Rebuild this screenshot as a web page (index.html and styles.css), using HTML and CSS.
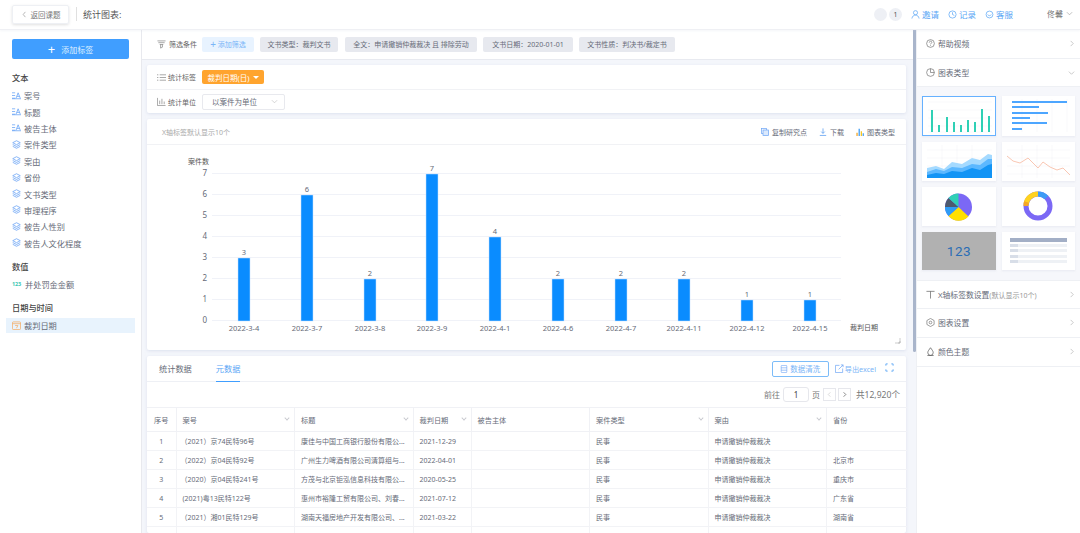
FILE: index.html
```html
<!DOCTYPE html>
<html lang="zh">
<head>
<meta charset="utf-8">
<title>统计图表</title>
<link rel="stylesheet" href="styles.css">
</head>
<body>
<div class="app">
  <header class="topbar">
    <button class="back"><svg class="ic7" viewBox="0 0 8 8"><path d="M5 1 2.500 4 5 7" fill="none" stroke="#999" stroke-width=".8"/></svg>返回课题</button>
    <span class="divider"></span>
    <span class="title">统计图表:</span>
    <div class="top-right">
      <span class="dot"></span><span class="dot">1</span>
      <a class="toplink"><svg class="ic9" viewBox="0 0 10 10" fill="none" stroke="#5aa6f5" stroke-width=".8"><circle cx="5" cy="3" r="2.300"/><path d="M1 9.500c.4-2.600 2-3.800 4-3.800s3.600 1.200 4 3.800"/></svg>邀请</a>
      <a class="toplink"><svg class="ic9" viewBox="0 0 10 10" fill="none" stroke="#5aa6f5" stroke-width=".8"><circle cx="5" cy="5" r="4"/><path d="M5 2.500V5l2 1"/></svg>记录</a>
      <a class="toplink"><svg class="ic9" viewBox="0 0 10 10" fill="none" stroke="#5aa6f5" stroke-width=".8"><circle cx="5" cy="5" r="3.800"/><path d="M3 5c.6 1 1.300 1.300 2 1.300S6.400 6 7 5"/></svg>客服</a>
      <span class="user">佟馨<svg class="ic7" viewBox="0 0 8 8"><path d="M1 2.500 4 5.500 7 2.500" fill="none" stroke="#999" stroke-width=".7"/></svg></span>
    </div>
  </header>
  <div class="body">
    <aside class="sidebar">
      <button class="add-tag"><span class="plus">+</span>添加标签</button>
      <h4 class="group first">文本</h4>
      <div class="item"><svg class="tic" viewBox="0 0 10 8"><path d="M0 1h3.500M0 4h3.500M0 7h3.500M4.500 7 6.800 1 9.200 7M5.500 5h2.800M0 7.600h10" fill="none" stroke="#5e9df5" stroke-width=".8"/></svg>案号</div>
      <div class="item"><svg class="tic" viewBox="0 0 10 8"><path d="M0 1h3.500M0 4h3.500M0 7h3.500M4.500 7 6.800 1 9.200 7M5.500 5h2.800M0 7.600h10" fill="none" stroke="#5e9df5" stroke-width=".8"/></svg>标题</div>
      <div class="item"><svg class="tic" viewBox="0 0 10 8"><path d="M0 1h3.500M0 4h3.500M0 7h3.500M4.500 7 6.800 1 9.200 7M5.500 5h2.800M0 7.600h10" fill="none" stroke="#5e9df5" stroke-width=".8"/></svg>被告主体</div>
      <div class="item"><svg class="tic" viewBox="0 0 10 10"><use href="#layers"/></svg>案件类型</div>
      <div class="item"><svg class="tic" viewBox="0 0 10 10"><use href="#layers"/></svg>案由</div>
      <div class="item"><svg class="tic" viewBox="0 0 10 10"><use href="#layers"/></svg>省份</div>
      <div class="item"><svg class="tic" viewBox="0 0 10 10"><use href="#layers"/></svg>文书类型</div>
      <div class="item"><svg class="tic" viewBox="0 0 10 10"><use href="#layers"/></svg>审理程序</div>
      <div class="item"><svg class="tic" viewBox="0 0 10 10"><use href="#layers"/></svg>被告人性别</div>
      <div class="item"><svg class="tic" viewBox="0 0 10 10"><use href="#layers"/></svg>被告人文化程度</div>
      <h4 class="group">数值</h4>
      <div class="item"><span class="num-ic">123</span>并处罚金金额</div>
      <h4 class="group">日期与时间</h4>
      <div class="item active"><svg class="tic" viewBox="0 0 10 10" fill="none" stroke="#f5a85c" stroke-width=".8"><rect x=".5" y="1" width="9" height="8.500" rx="1"/><path d="M.5 3h9M3.500 5h3L5 8"/></svg>裁判日期</div>
    </aside>
    <main class="main">
      <div class="filterbar">
        <span class="flabel"><svg class="ic9" viewBox="0 0 10 10" fill="none" stroke="#777" stroke-width=".7"><path d="M.5 1h9M1.500 3h7M3 5h4M4 5v4l2-1V5"/></svg>筛选条件</span>
        <button class="add-filter"><span class="plus-sm">+</span>添加筛选</button>
        <span class="chip w78">文书类型：裁判文书</span>
        <span class="chip w132">全文：申请撤销仲裁裁决 且 排除劳动</span>
        <span class="chip w90">文书日期：2020-01-01</span>
        <span class="chip w96">文书性质：判决书/裁定书</span>
      </div>
      <div class="content">
        <section class="panel settings">
          <div class="srow">
            <span class="slabel"><svg class="ic9" viewBox="0 0 10 10" stroke="#777" stroke-width=".7"><path d="M0 2h1.500M0 5h1.500M0 8h1.500M3 2h7M3 5h7M3 8h7"/></svg>统计标签</span>
            <span class="orange">裁判日期(日)<i class="caret"></i></span>
          </div>
          <div class="srow">
            <span class="slabel"><svg class="ic9" viewBox="0 0 10 10" fill="none" stroke="#777" stroke-width=".7"><path d="M.5 1v8.500h9M3 8V4M5.500 8V2M8 8V5"/></svg>统计单位</span>
            <span class="select">以案件为单位<svg class="ic7" viewBox="0 0 8 8"><path d="M1 2.500 4 5.500 7 2.500" fill="none" stroke="#bbb" stroke-width=".7"/></svg></span>
          </div>
        </section>
        <section class="panel chart-panel">
          <div class="chart-head">
            <span class="hint">X轴标签默认显示10个</span>
            <div class="tools">
              <span class="tool"><svg class="ic8" viewBox="0 0 10 10" fill="none" stroke="#6ea6f5" stroke-width=".9"><rect x=".5" y=".5" width="6.500" height="6.500"/><rect x="2.500" y="2.500" width="7" height="7" fill="#dbe9fd"/></svg>复制研究点</span>
              <span class="tool"><svg class="ic8" viewBox="0 0 10 10" fill="none" stroke="#4f96f0" stroke-width=".9"><path d="M5 .5v6M2.800 4.500 5 6.800l2.200-2.300M1 9.300h8"/></svg>下载</span>
              <span class="tool"><svg class="ic8" viewBox="0 0 10 10"><path d="M.5 10V6h1.600v4z" fill="#f5a623"/><path d="M3.200 10V1h1.600v9z" fill="#3d9bf5"/><path d="M5.900 10V4h1.600v6z" fill="#f5c623"/><path d="M8.300 10V6.500h1.500V10z" fill="#3d9bf5"/></svg>图表类型</span>
            </div>
          </div>
          <svg class="chart" viewBox="0 0 759 205" width="759" height="205">
            <g class="grid">
              <path d="M65 28.500H694M65 49.500H694M65 70.500H694M65 91.500H694M65 112.500H694M65 133.500H694M65 154.500H694M65 175.500H694"/>
            </g>
            <g class="ylab">
              <text x="60" y="31">7</text><text x="60" y="52">6</text><text x="60" y="73">5</text><text x="60" y="94">4</text><text x="60" y="115">3</text><text x="60" y="136">2</text><text x="60" y="157">1</text><text x="60" y="178">0</text>
            </g>
            <text class="axname" x="41" y="19">案件数</text>
            <g class="bars">
              <rect x="91" y="113" width="12" height="63"/><rect x="154" y="50" width="12" height="126"/><rect x="217" y="134" width="12" height="42"/><rect x="279" y="29" width="12" height="147"/><rect x="342" y="92" width="12" height="84"/><rect x="405" y="134" width="12" height="42"/><rect x="468" y="134" width="12" height="42"/><rect x="531" y="134" width="12" height="42"/><rect x="594" y="155" width="12" height="21"/><rect x="657" y="155" width="12" height="21"/>
            </g>
            <g class="vals">
              <text x="97" y="110">3</text><text x="160" y="47">6</text><text x="223" y="131">2</text><text x="285" y="26">7</text><text x="348" y="89">4</text><text x="411" y="131">2</text><text x="474" y="131">2</text><text x="537" y="131">2</text><text x="600" y="152">1</text><text x="663" y="152">1</text>
            </g>
            <g class="xlab">
              <text x="97" y="186">2022-3-4</text><text x="160" y="186">2022-3-7</text><text x="223" y="186">2022-3-8</text><text x="285" y="186">2022-3-9</text><text x="348" y="186">2022-4-1</text><text x="411" y="186">2022-4-6</text><text x="474" y="186">2022-4-7</text><text x="537" y="186">2022-4-11</text><text x="600" y="186">2022-4-12</text><text x="663" y="186">2022-4-15</text>
            </g>
            <text class="axname" x="703" y="185">裁判日期</text>
            <path class="grip" d="M748 198h5v-5M751 198h2v-2"/>
          </svg>
        </section>
        <section class="panel data-panel">
          <div class="tabs">
            <span class="tab">统计数据</span>
            <span class="tab on">元数据</span>
            <div class="tab-tools">
              <button class="clean"><svg class="ic8" viewBox="0 0 10 10" fill="none" stroke="#6ea6f5" stroke-width=".8"><rect x="1.500" y=".5" width="7" height="9" rx="1"/><path d="M1.500 3.500h7M1.500 6.500h7"/></svg>数据清洗</button>
              <span class="export"><svg class="ic9" viewBox="0 0 10 10" fill="none" stroke="#6ea6f5" stroke-width=".8"><path d="M5 1.500H.5v8h8V5M4 6l5-5M6.500 1H9v2.500"/></svg>导出excel</span>
              <svg class="ic9 expand" viewBox="0 0 10 10" fill="none" stroke="#5aa6f5" stroke-width="1"><path d="M1 3V1h2M7 1h2v2M1 7v2h2M9 7v2H7"/></svg>
            </div>
          </div>
          <div class="pager">
            <span>前往</span><span class="pg-input">1</span><span>页</span>
            <span class="pg-btn"><svg class="ic7" viewBox="0 0 8 8"><path d="M5 1.500 2.500 4 5 6.500" fill="none" stroke="#ccc" stroke-width=".8"/></svg></span>
            <span class="pg-btn next"><svg class="ic7" viewBox="0 0 8 8"><path d="M3 1.500 5.500 4 3 6.500" fill="none" stroke="#555" stroke-width=".8"/></svg></span>
            <span class="total">共12,920个</span>
          </div>
          <table class="grid-table">
            <colgroup><col class="c1"><col class="c2"><col class="c2"><col class="c3"><col class="c2"><col class="c2"><col class="c2"><col class="c4"></colgroup>
            <thead>
              <tr><th class="ctr">序号</th><th>案号<i class="chev"></i></th><th>标题<i class="chev"></i></th><th>裁判日期<i class="chev"></i></th><th>被告主体</th><th>案件类型<i class="chev"></i></th><th>案由<i class="chev"></i></th><th>省份</th></tr>
            </thead>
            <tbody>
              <tr><td class="ctr">1</td><td class="ind">（2021）京74民特96号</td><td>康佳与中国工商银行股份有限公...</td><td>2021-12-29</td><td></td><td>民事</td><td>申请撤销仲裁裁决</td><td></td></tr>
              <tr><td class="ctr">2</td><td class="ind">（2022）京04民特92号</td><td>广州生力啤酒有限公司清算组与...</td><td>2022-04-01</td><td></td><td>民事</td><td>申请撤销仲裁裁决</td><td>北京市</td></tr>
              <tr><td class="ctr">3</td><td class="ind">（2020）京04民特241号</td><td>方茂与北京钜泓信息科技有限公...</td><td>2020-05-25</td><td></td><td>民事</td><td>申请撤销仲裁裁决</td><td>重庆市</td></tr>
              <tr><td class="ctr">4</td><td>(2021)粤13民特122号</td><td>惠州市裕隆工贸有限公司、刘春...</td><td>2021-07-12</td><td></td><td>民事</td><td>申请撤销仲裁裁决</td><td>广东省</td></tr>
              <tr><td class="ctr">5</td><td class="ind">（2021）湘01民特129号</td><td>湖南天福房地产开发有限公司、...</td><td>2021-03-22</td><td></td><td>民事</td><td>申请撤销仲裁裁决</td><td>湖南省</td></tr>
              <tr><td></td><td></td><td></td><td></td><td></td><td></td><td></td><td></td></tr>
            </tbody>
          </table>
        </section>
      </div>
    </main>
    <div class="scroll-track"><div class="scroll-thumb"></div></div>
    <aside class="rightbar">
      <div class="rrow h29"><svg class="ic9" viewBox="0 0 10 10" fill="none" stroke="#666" stroke-width=".7"><circle cx="5" cy="5" r="4.300"/><path d="M3.600 4c0-2 2.900-2 2.900-.2 0 1-1.500 1-1.500 2.200M5 7v.8"/></svg><span class="rtext">帮助视频</span><svg class="ic7" viewBox="0 0 8 8"><path d="M3 1 6 4 3 7" fill="none" stroke="#aaa" stroke-width=".7"/></svg></div>
      <div class="rrow h28"><svg class="ic9" viewBox="0 0 10 10" fill="none" stroke="#666" stroke-width=".7"><circle cx="5" cy="5" r="4.300"/><path d="M5 .7V5h4.300"/></svg><span class="rtext">图表类型</span><svg class="ic7" viewBox="0 0 8 8"><path d="M1 3 4 6 7 3" fill="none" stroke="#aaa" stroke-width=".7"/></svg></div>
      <div class="thumbs">
        <div class="thumb sel"><svg viewBox="0 0 74 40"><path class="tgrid" d="M6 6H70M6 14H70M6 22H70M6 30H70M6 36H70"/><path d="M9 14h2v22H9zM16 29h2v7h-2zM24 21h2v15h-2zM31 26h2v10h-2zM38 29h2v7h-2zM45 24h2v12h-2zM52 26h2v10h-2zM59 13h2v23h-2zM66 20h2v16h-2z" fill="#2fd0b5"/></svg></div>
        <div class="thumb"><svg viewBox="0 0 73 40"><path class="tgrid" d="M20 3V36M35 3V36M50 3V36M65 3V36"/><path d="M10 5h55v2H10zM10 10h27v2H10zM10 16h36v2H10zM10 21h18v2H10zM10 26h35v2H10zM10 32h10v2H10z" fill="#4da6ff"/></svg></div>
        <div class="thumb"><svg viewBox="0 0 74 39"><path class="tgrid" d="M5 8H70M5 16H70M5 24H70M5 32H70M20 3V36M35 3V36M50 3V36"/><path d="M5 26 14 24 22 27 30 20 40 22 50 16 58 18 66 12 70 13V36H5z" fill="#a5daff"/><path d="M5 30 14 27 22 29 30 25 40 26 50 22 58 23 66 17 70 17V36H5z" fill="#5cb8ff"/><path d="M5 33 14 31 22 32 30 29 40 30 50 26 58 28 66 23 70 22V36H5z" fill="#1294f5"/></svg></div>
        <div class="thumb"><svg viewBox="0 0 73 39"><path class="tgrid" d="M5 8H68M5 16H68M5 24H68M5 32H68M20 3V36M35 3V36M50 3V36"/><path d="M5 14 11 19 18 21 26 16 36 26 41 20 48 25 55 28 61 26 68 33" fill="none" stroke="#f8b9a0" stroke-width=".8"/></svg></div>
        <div class="thumb"><svg viewBox="0 0 73 39"><circle cx="36" cy="20" r="13.500" fill="#7b68f5"/><path d="M36 20 46 29.500A13.500 13.500 0 0 1 26 29z" fill="#ffe000"/><path d="M36 20 26 29A13.500 13.500 0 0 1 22.500 20z" fill="#2f9cf5"/><path d="M36 20H22.500A13.500 13.500 0 0 1 26 11z" fill="#4d5a6e"/><path d="M36 20 26 11A13.500 13.500 0 0 1 36 6.500z" fill="#2fd0b5"/></svg></div>
        <div class="thumb"><svg viewBox="0 0 73 39"><circle cx="36" cy="19" r="12" fill="none" stroke="#7b68f5" stroke-width="5"/><path d="M36 7A12 12 0 0 1 44.500 10.500" fill="none" stroke="#3d9bf5" stroke-width="5"/><path d="M24 17A12 12 0 0 1 36 7" fill="none" stroke="#ffd21f" stroke-width="5"/><path d="M24 19A12 12 0 0 1 24.500 15" fill="none" stroke="#f5a623" stroke-width="5"/></svg></div>
        <div class="thumb grey"><span>123</span></div>
        <div class="thumb"><svg viewBox="0 0 73 38"><path d="M8 6h57v4H8z" fill="#a3afc6"/><path d="M8 12h57v3H8zM8 17h57v3H8zM8 23h57v3H8zM8 28h57v3H8z" fill="#eef1f5"/><path d="M8 12h8v3H8zM8 17h8v3H8zM8 23h8v3H8zM8 28h8v3H8z" fill="#d8dee8"/></svg></div>
      </div>
      <div class="rrow h29 top"><svg class="ic9" viewBox="0 0 10 10" fill="none" stroke="#666" stroke-width=".8"><path d="M.5 1.500h9M5 1.500V9.500"/></svg><span class="rtext">X轴标签数设置<small>(默认显示10个)</small></span><svg class="ic7" viewBox="0 0 8 8"><path d="M3 1 6 4 3 7" fill="none" stroke="#aaa" stroke-width=".7"/></svg></div>
      <div class="rrow h29"><svg class="ic9" viewBox="0 0 10 10" fill="none" stroke="#666" stroke-width=".7"><path d="M5 .5 9 2.800V7.200L5 9.500 1 7.200V2.800z"/><circle cx="5" cy="5" r="1.500"/></svg><span class="rtext">图表设置</span><svg class="ic7" viewBox="0 0 8 8"><path d="M3 1 6 4 3 7" fill="none" stroke="#aaa" stroke-width=".7"/></svg></div>
      <div class="rrow h29"><svg class="ic9" viewBox="0 0 10 10" fill="none" stroke="#555" stroke-width=".8"><path d="M5 .8C3.500 3 2 4.500 2 6.300a3 3 0 0 0 6 0C8 4.500 6.500 3 5 .8z"/><path d="M1.500 9.500h7"/></svg><span class="rtext">颜色主题</span><svg class="ic7" viewBox="0 0 8 8"><path d="M3 1 6 4 3 7" fill="none" stroke="#aaa" stroke-width=".7"/></svg></div>
    </aside>
  </div>
</div>
<svg class="defs" width="0" height="0"><defs><g id="layers" fill="none" stroke="#6ea6f5" stroke-width=".9"><path d="M5 .8 9.200 3 5 5.200.8 3z"/><path d="M.8 5 5 7.200 9.200 5M.8 7 5 9.200 9.200 7"/></g></defs></svg>
</body>
</html>
```
FILE: styles.css
```css
* { box-sizing: border-box; }
html, body { margin: 0; height: 100%; overflow: hidden; }
body { font-family: "Noto Sans", "Noto Sans CJK SC", sans-serif; font-size: 7px; color: #666b78; background: #fff; }
svg { display: block; flex: none; }
.defs { position: absolute; }
.ic7 { width: 7px; height: 7px; }
.ic8 { width: 8px; height: 8px; }
.ic9 { width: 9px; height: 9px; }
button { font: inherit; color: inherit; margin: 0; padding: 0; border: 0; background: none; }

.app { display: flex; flex-direction: column; height: 533px; width: 1080px; }
.topbar { height: 30px; flex: none; display: flex; align-items: center; padding: 0 7px 1px 12px; border-bottom: 1px solid #eff0f4; box-shadow: 0 1px 2px rgba(200, 205, 220, .2); position: relative; z-index: 2; }
.back { width: 57px; height: 19px; display: flex; align-items: center; justify-content: center; gap: 3px; font-size: 7.500px; color: #777; border: 1px solid #eef0f4; border-radius: 2px; box-shadow: 0 1px 3px rgba(0, 0, 0, .12); }
.divider { width: 1px; height: 14px; background: #e0e0e0; margin: 0 6px 0 7px; }
.title { font-size: 9px; color: #555; }
.top-right { margin-left: auto; display: flex; align-items: center; }
.dot { width: 13px; height: 13px; border-radius: 50%; background: #eef0f5; margin-right: 2px; font-size: 7px; text-align: center; line-height: 13px; color: #555; }
.toplink { display: flex; align-items: center; gap: 2px; color: #5aa6f5; font-size: 8.500px; margin-left: 9px; }
.dot + .toplink { margin-left: 7px; }
.user { display: flex; align-items: center; gap: 3px; font-size: 8px; color: #777; margin-left: 34px; margin-top: -2px; }

.body { flex: 1; display: flex; min-height: 0; }
.sidebar { width: 142px; flex: none; border-right: 1px solid #e8e9ee; padding: 9px 6px 0 6px; }
.add-tag { display: flex; align-items: center; justify-content: center; gap: 6px; width: 117px; height: 20px; margin-left: 6px; background: #409eff; color: #dff0ff; font-size: 8px; border-radius: 2px; }
.plus { font-size: 13px; line-height: 1; color: #fff; }
.group { margin: 10px 0 0 6px; height: 11px; line-height: 11px; font-size: 8.200px; font-weight: 500; color: #444; }
.group.first { margin-top: 13px; }
.item { display: flex; align-items: center; gap: 3px; height: 16.400px; padding-left: 6px; font-size: 8.200px; color: #666b78; }
.group + .item { margin-top: 4px; }
.group + .item.active { margin-top: 4.500px; height: 15px; width: 129px; background: #e8f3fd; }
.tic { width: 9px; height: 9px; }
.num-ic { width: 10px; font-size: 5.500px; font-weight: 700; color: #3cc8b4; letter-spacing: -.2px; }

.main { width: 771px; flex: none; display: flex; flex-direction: column; background: #f4f6fb; min-height: 0; }
.filterbar { height: 30px; flex: none; background: #fff; border-bottom: 1px solid #e8eaf0; display: flex; align-items: center; gap: 6px; padding-left: 15px; padding-bottom: 1px; }
.flabel { display: flex; align-items: center; gap: 3px; color: #666; }
.add-filter { width: 52px; height: 15px; background: #e8f3ff; color: #7ab5f7; border-radius: 2px; margin-left: -1px; display: flex; align-items: center; justify-content: center; gap: 2px; }
.plus-sm { font-size: 10px; line-height: 1; }
.chip { height: 15px; line-height: 15px; text-align: center; background: #e7e9ef; border-radius: 2px; color: #666b78; white-space: nowrap; }
.w78 { width: 78px; }
.w132 { width: 132px; margin-left: 1px; }
.w90 { width: 90px; }
.w96 { width: 96px; }

.content { flex: 1; padding: 5px 7px 0 5px; display: flex; flex-direction: column; gap: 6px; min-height: 0; overflow: hidden; }
.panel { background: #fff; border-radius: 2px; box-shadow: 0 1px 3px rgba(200, 208, 230, .5); flex: none; }
.settings { height: 48px; }
.srow { height: 24px; display: flex; align-items: center; padding-left: 10px; gap: 5px; }
.srow + .srow { border-top: 1px solid #f1f2f5; }
.slabel { display: flex; align-items: center; gap: 2px; color: #666; width: 40px; white-space: nowrap; }
.orange { width: 62px; height: 14px; border-radius: 2px; background: #ffa42e; color: #fff; font-size: 7.500px; display: flex; align-items: center; justify-content: center; gap: 3px; }
.caret { border: 3px solid transparent; border-top: 3px solid #fff; border-bottom: 0; }
.select { width: 83px; height: 16px; border: 1px solid #e8e9ee; border-radius: 2px; display: flex; align-items: center; justify-content: space-between; padding: 0 6px 0 9px; font-size: 7.500px; color: #666b78; }

.chart-panel { height: 231px; }
.chart-head { height: 26px; display: flex; align-items: center; justify-content: space-between; padding: 0 11px 0 15px; border-bottom: 1px solid #f1f2f5; }
.hint { color: #aaa; }
.tools { display: flex; gap: 12px; }
.tool { display: flex; align-items: center; gap: 3px; color: #666b78; }
.chart .grid path { stroke: #f0f2f8; stroke-width: 1; fill: none; }
.chart text { font-family: "Noto Sans", "Noto Sans CJK SC", sans-serif; font-size: 7.500px; fill: #666b78; }
.chart .ylab text { text-anchor: end; font-size: 8px; }
.chart .vals text, .chart .xlab text { text-anchor: middle; }
.chart .axname { font-size: 7px; fill: #555; }
.bars rect { fill: #0a8cff; stroke: #c2e0ff; stroke-width: .5; }
.grip { fill: none; stroke: #aaa; stroke-width: .6; }

.data-panel { flex: 1; min-height: 177px; }
.tabs { height: 26px; display: flex; align-items: center; gap: 24px; padding-left: 12px; border-bottom: 1px solid #eef0f5; font-size: 8.200px; }
.tab { height: 26px; line-height: 25px; color: #666b78; }
.tab.on { color: #5aa6f5; border-bottom: 1px solid #409eff; }
.tab-tools { margin-left: auto; display: flex; align-items: center; padding-right: 12px; }
.clean { width: 57px; height: 16px; border: 1px solid #7cbcf8; border-radius: 2px; font-size: 7.500px; color: #7ab5f7; display: flex; align-items: center; justify-content: center; gap: 2px; margin-right: 6px; }
.export { display: flex; align-items: center; gap: 1px; color: #7ab5f7; font-size: 7.200px; margin-right: 9px; }
.expand { margin-top: -2px; }
.pager { height: 25px; display: flex; align-items: center; justify-content: flex-end; padding-right: 6px; gap: 3px; font-size: 8px; color: #777; }
.pg-input { width: 26px; height: 15px; line-height: 14px; text-align: center; border: 1px solid #e6e7ec; border-radius: 3px; color: #444; }
.pg-btn { width: 13px; height: 13px; border: 1px solid #e6e7ec; display: flex; align-items: center; justify-content: center; }
.pg-btn.next { margin-left: -1px; }
.total { margin-left: 2px; font-size: 8.600px; }
.grid-table { width: 759px; table-layout: fixed; border-collapse: collapse; font-size: 7px; }
.c1 { width: 29px; }
.c2 { width: 118.500px; }
.c3 { width: 58px; }
.c4 { width: 80px; }
.grid-table th { height: 24px; padding: 0 6px; font-weight: 400; text-align: left; position: relative; border: 1px solid #f0f1f5; border-left: 0; color: #666b78; font-size: 7.200px; }
.grid-table td { height: 19px; padding: 0 6px; border: 1px solid #f2f3f6; border-left: 0; white-space: nowrap; overflow: hidden; color: #666b78; }
.grid-table tr > :last-child { border-right: 0; }
.grid-table .ctr { padding: 0; text-align: center; }
.grid-table .ind { padding-left: 4px; }
.chev { position: absolute; right: 5px; top: 8px; width: 4px; height: 4px; border-right: 1px solid #c4c6cc; border-bottom: 1px solid #c4c6cc; transform: rotate(45deg) scale(.9); }

.scroll-track { width: 3px; flex: none; background: #f4f6fb; }
.scroll-thumb { height: 322px; background: #a9b5cb; border-radius: 0 0 2px 2px; }
.rightbar { flex: 1; min-width: 0; border-left: 1px solid #eef0f4; }
.rrow { display: flex; align-items: center; padding: 0 5px 0 9px; color: #666b78; font-size: 7.800px; gap: 3px; border-bottom: 1px solid #eef0f4; }
.h29 { height: 29px; padding-bottom: 1px; }
.h28 { height: 28px; padding-bottom: 1px; }
.rrow.top { border-top: 1px solid #eef0f4; }
.rtext { flex: 1; white-space: nowrap; }
.rtext small { font-size: 7px; color: #999; }
.thumbs { background: #f6f7fb; padding: 9px 4px 10px 5px; display: grid; grid-template-columns: 74px 73px; grid-template-rows: 40px 39px 39px 38px; column-gap: 6px; row-gap: 6px; }
.thumb { background: #fff; box-shadow: 0 1px 2px rgba(200, 205, 220, .3); }
.thumb svg { width: 100%; height: 100%; }
.thumb.sel { border: 1px solid #66b1ff; }
.thumb.sel svg { margin: -1px; width: 74px; height: 40px; }
.thumb.grey { background: #b1b1b1; display: flex; align-items: center; justify-content: center; font-family: Roboto, sans-serif; font-size: 13.500px; letter-spacing: .5px; color: #2a6db5; }
.tgrid { stroke: #f2f3f6; stroke-width: .5; fill: none; }
```
